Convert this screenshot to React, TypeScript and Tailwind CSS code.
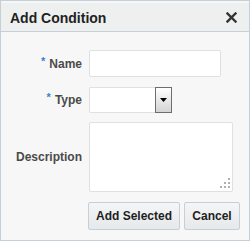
import React from "react";

export default function App() {
  return (
    <div
      className="w-[250px] h-[241px] border border-[#c5cfd8] bg-[#f7f7f7] flex flex-col box-border"
      style={{ fontFamily: '"Liberation Sans", Arial, sans-serif' }}
    >
      <div className="h-[31px] shrink-0 border-b border-[#c5cfd8] bg-[#eef0f0] border-t-2 border-t-[#f5f6f6] flex items-center justify-between pl-[9px] pr-[12px]">
        <span className="text-[14px] font-bold text-[#222] leading-none mt-[1px]">Add Condition</span>
        <svg width="11" height="11" viewBox="0 0 11 11" className="mt-[1px]">
          <path d="M1.5 1.5 L9.5 9.5 M9.5 1.5 L1.5 9.5" stroke="#333" strokeWidth="2.4" strokeLinecap="square" />
        </svg>
      </div>
      <div className="flex flex-col pt-[18px] gap-[9px]">
        <div className="flex items-center">
          <div className="w-[88px] pr-[7px] flex justify-end items-center text-[12px] font-bold text-[#4a4a4a]">
            <span className="text-[#3d7fd0] text-[11px] self-start -mt-[2px] mr-[4px]">*</span>
            <span>Name</span>
          </div>
          <div className="w-[132px] h-[27px] bg-white border border-[#dde1e4] rounded-[2px]" />
        </div>
        <div className="flex items-center mt-[1px]">
          <div className="w-[88px] pr-[7px] flex justify-end items-center text-[12px] font-bold text-[#4a4a4a]">
            <span className="text-[#3d7fd0] text-[11px] self-start -mt-[2px] mr-[4px]">*</span>
            <span>Type</span>
          </div>
          <div className="flex h-[26px]">
            <div className="w-[66px] h-full bg-white border border-[#dde1e4] border-r-0 rounded-l-[2px]" />
            <div className="w-[17px] h-full border border-[#6e6e6e] bg-gradient-to-b from-[#ffffff] to-[#d4d4d4] flex items-center justify-center">
              <svg width="7" height="4" viewBox="0 0 7 4">
                <path d="M0 0 L7 0 L3.5 4 Z" fill="#000" />
              </svg>
            </div>
          </div>
        </div>
        <div className="flex items-center">
          <div className="w-[88px] pr-[7px] flex justify-end items-center text-[12px] font-bold text-[#4a4a4a]">
            <span>Description</span>
          </div>
          <div className="relative w-[144px] h-[70px] bg-white border border-[#dde1e4] rounded-[2px]">
            <svg width="11" height="11" viewBox="0 0 11 11" className="absolute right-[1px] bottom-[2px]">
              <rect x="8" y="0" width="2" height="2" fill="#b0b0b0" />
              <rect x="4" y="4" width="2" height="2" fill="#b0b0b0" />
              <rect x="8" y="4" width="2" height="2" fill="#b0b0b0" />
              <rect x="0" y="8" width="2" height="2" fill="#b0b0b0" />
              <rect x="4" y="8" width="2" height="2" fill="#b0b0b0" />
              <rect x="8" y="8" width="2" height="2" fill="#b0b0b0" />
            </svg>
          </div>
        </div>
        <div className="flex pl-[87px] gap-[4px] mt-[1px]">
          <button className="w-[92px] h-[28px] border border-[#c5cfd8] rounded-[2px] bg-gradient-to-b from-[#f3f5f6] to-[#e6e9eb] text-[12px] font-bold text-[#1f1f1f]">
            Add Selected
          </button>
          <button className="w-[56px] h-[28px] border border-[#c5cfd8] rounded-[2px] bg-gradient-to-b from-[#f3f5f6] to-[#e6e9eb] text-[12px] font-bold text-[#1f1f1f]">
            Cancel
          </button>
        </div>
      </div>
    </div>
  );
}
